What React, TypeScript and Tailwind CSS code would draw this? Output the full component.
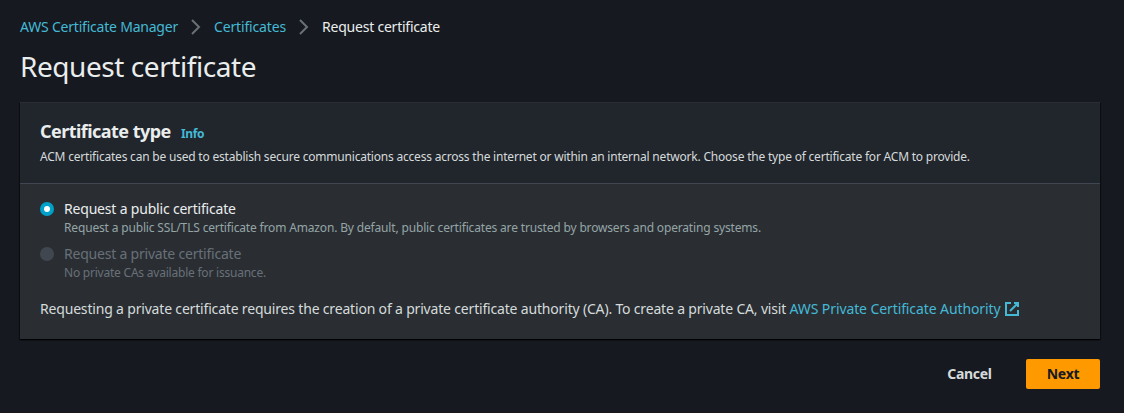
function Chevron() {
  return (
    <svg className="h-4 w-4 shrink-0" viewBox="0 0 16 16" fill="none" stroke="#687078" strokeWidth="2">
      <path d="M4 1l7 7-7 7" />
    </svg>
  );
}

function ExternalIcon() {
  return (
    <svg className="ml-[3px] h-4 w-4 shrink-0" viewBox="0 0 16 16" fill="none" stroke="#44b9d6" strokeWidth="2">
      <path d="M10 2h4v4M6 10l8-8M14 9.05V14H2V2h5" />
    </svg>
  );
}

export default function App() {
  return (
    <div className="flex h-[413px] w-[1124px] flex-col border-b border-[#1d1519] bg-[#16191f] pl-5 pr-6 pt-4 font-['Noto_Sans','Open_Sans',sans-serif] text-sm leading-[22px] text-[#d5dbdb]">
      <nav className="flex h-[22px] items-center whitespace-nowrap">
        <a className="w-[158px] tracking-[-0.21px] text-[#44b9d6]">AWS Certificate Manager</a>
        <span className="flex w-9 justify-center"><Chevron /></span>
        <a className="w-[72px] tracking-[-0.16px] text-[#44b9d6]">Certificates</a>
        <span className="flex w-9 justify-center"><Chevron /></span>
        <span className="tracking-[-0.22px] text-[#eaeded]">Request certificate</span>
      </nav>
      <h1 className="mt-[10px] h-9 whitespace-nowrap text-[28px] leading-9 tracking-[-0.44px] text-[#eaeded]">Request certificate</h1>
      <section className="mt-[18px] h-[237px] bg-[#2a2e33] shadow-[0_1px_1px_#000000b0,1px_1px_1px_#00000060,-1px_1px_1px_#00000060]">
        <header className="h-[82px] border-t border-b border-t-[#2a2e33] border-b-[#414750] bg-[#21252c] px-5 pt-[17px]">
          <div className="flex h-[22px] items-baseline whitespace-nowrap">
            <h2 className="w-[141px] text-[18px] font-bold tracking-[-0.54px] text-[#eaeded]">Certificate type</h2>
            <a className="text-xs font-bold leading-[22px] tracking-[-0.4px] text-[#44b9d6]">Info</a>
          </div>
          <p className="mt-[5px] whitespace-nowrap text-xs leading-5 tracking-[-0.206px]">ACM certificates can be used to establish secure communications access across the internet or within an internal network. Choose the type of certificate for ACM to provide.</p>
        </header>
        <div className="whitespace-nowrap px-5 pt-[14px]">
          <label className="flex h-[45px] gap-[10px]">
            <span className="mt-1 flex h-[14px] w-[14px] items-center justify-center rounded-full bg-[#00a1c9]">
              <span className="h-[6px] w-[6px] rounded-full bg-white" />
            </span>
            <span>
              <span className="block h-[22px] tracking-[-0.19px] text-[#eaeded]">Request a public certificate</span>
              <span className="block text-xs leading-4 tracking-[-0.162px] text-[#95a5a6]">Request a public SSL/TLS certificate from Amazon. By default, public certificates are trusted by browsers and operating systems.</span>
            </span>
          </label>
          <label className="flex h-[45px] gap-[10px] text-[#687078]">
            <span className="mt-1 h-[14px] w-[14px] rounded-full bg-[#414750]" />
            <span>
              <span className="block h-[22px] tracking-[-0.21px]">Request a private certificate</span>
              <span className="block text-xs leading-4 tracking-[-0.22px]">No private CAs available for issuance.</span>
            </span>
          </label>
          <p className="mt-[10px] flex items-center">
            <span className="w-[749.5px] tracking-[-0.178px]">Requesting a private certificate requires the creation of a private certificate authority (CA). To create a private CA, visit</span>
            <a className="flex items-center tracking-[-0.1px] text-[#44b9d6]">AWS Private Certificate Authority<ExternalIcon /></a>
          </p>
        </div>
      </section>
      <footer className="mt-5 flex h-[30px] items-center justify-end font-bold">
        <button className="mr-[34px] w-[45px] whitespace-nowrap tracking-[-0.3px]">Cancel</button>
        <button className="h-[30px] w-[74px] rounded-[2px] bg-[#ff9900] tracking-[-0.3px] text-[#16191f]">Next</button>
      </footer>
    </div>
  );
}
